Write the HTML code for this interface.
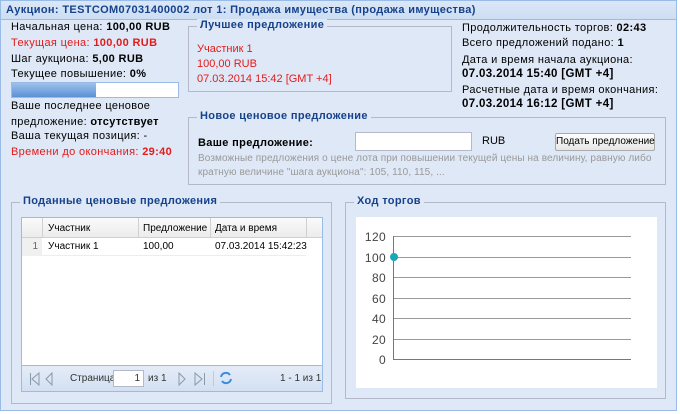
<!DOCTYPE html>
<html><head><meta charset="utf-8"><style>
*{margin:0;padding:0;box-sizing:border-box}
body{width:680px;height:413px;background:#fff;font-family:"Liberation Sans",Arial,sans-serif;font-size:11px;letter-spacing:0.35px;color:#000;position:relative;overflow:hidden}
.a{position:absolute;white-space:nowrap}
#panel{position:absolute;left:0;top:0;width:677px;height:411px;border:1px solid #99bbe8;background:#dfe8f6}
#hdr{position:absolute;left:0;top:0;width:675px;height:19px;background:linear-gradient(#dae7f6,#cddef3);border-bottom:1px solid #99bbe8;color:#15428b;font-weight:bold;padding:3px 0 0 5px}
.fs{position:absolute;border:1px solid #b5b8c8}
.lg{position:absolute;top:-8px;left:8px;background:#dfe8f6;padding:0 3px;color:#15428b;font-weight:bold;font-size:11px}
.red{color:#e31b1b}
b{font-weight:bold}
.g{color:#999;letter-spacing:0.1px}
.gr{font-size:10px;letter-spacing:0}
</style></head><body>
<div id="panel">
<div id="hdr">Аукцион: TESTCOM07031400002 лот 1: Продажа имущества (продажа имущества)</div>

<div class="a" style="left:10px;top:20px">Начальная цена: <b>100,00 RUB</b></div>
<div class="a red" style="left:10px;top:36px">Текущая цена: <b>100,00 RUB</b></div>
<div class="a" style="left:10px;top:52px">Шаг аукциона: <b>5,00 RUB</b></div>
<div class="a" style="left:10px;top:67px">Текущее повышение: <b>0%</b></div>
<div class="a" style="left:10px;top:81px;width:168px;height:16px;border:1px solid #99bbe8;background:#fff"><div style="width:84px;height:14px;background:linear-gradient(#9fc1ea,#5b91d6)"></div></div>
<div class="a" style="left:10px;top:99px">Ваше последнее ценовое</div>
<div class="a" style="left:10px;top:115px">предложение: <b>отсутствует</b></div>
<div class="a" style="left:10px;top:129px">Ваша текущая позиция: -</div>
<div class="a red" style="left:10px;top:145px">Времени до окончания: <b>29:40</b></div>

<div class="fs" style="left:187px;top:25px;width:264px;height:66px"><div class="lg">Лучшее предложение</div>
<div class="a red" style="left:8px;top:16px;letter-spacing:0">Участник 1</div>
<div class="a red" style="left:8px;top:31px;letter-spacing:0">100,00 RUB</div>
<div class="a red" style="left:8px;top:46px;letter-spacing:0">07.03.2014 15:42 [GMT +4]</div>
</div>

<div class="a" style="left:461px;top:21px">Продолжительность торгов: <b>02:43</b></div>
<div class="a" style="left:461px;top:36px">Всего предложений подано: <b>1</b></div>
<div class="a" style="left:461px;top:53px">Дата и время начала аукциона:</div>
<div class="a" style="left:461px;top:67px;font-weight:bold;font-size:11.5px">07.03.2014 15:40 [GMT +4]</div>
<div class="a" style="left:461px;top:83px">Расчетные дата и время окончания:</div>
<div class="a" style="left:461px;top:97px;font-weight:bold;font-size:11.5px">07.03.2014 16:12 [GMT +4]</div>

<div class="fs" style="left:187px;top:116px;width:478px;height:68px"><div class="lg">Новое ценовое предложение</div>
<div class="a" style="left:9px;top:19px;font-weight:bold">Ваше предложение:</div>
<div class="a" style="left:166px;top:14px;width:117px;height:19px;border:1px solid #b5b8c8;background:#fff"></div>
<div class="a" style="left:293px;top:17px;letter-spacing:0">RUB</div>
<div class="a" style="left:366px;top:15px;width:100px;height:18px;border:1px solid #aaa;background:linear-gradient(#fff,#e6e6e6);border-radius:2px;text-align:center;font-size:10px;line-height:16px;letter-spacing:0">Подать предложение</div>
<div class="a g" style="left:9px;top:35px;font-size:10px">Возможные предложения о цене лота при повышении текущей цены на величину, равную либо</div>
<div class="a g" style="left:9px;top:49px;font-size:10px">кратную величине "шага аукциона": 105, 110, 115, ...</div>
</div>

<div class="fs" style="left:10px;top:201px;width:321px;height:202px"><div class="lg">Поданные ценовые предложения</div>
<div class="a gr" style="left:9px;top:14px;width:302px;height:175px;background:#fff;border:1px solid #99bbe8">
 <div class="a" style="left:0;top:0;width:300px;height:20px;background:linear-gradient(#fafafa,#ececec);border-bottom:1px solid #d0d0d0">
  <div class="a" style="left:20px;top:0;height:20px;border-left:1px solid #d0d0d0"></div>
  <div class="a" style="left:26px;top:5px">Участник</div>
  <div class="a" style="left:116px;top:0;height:20px;border-left:1px solid #d0d0d0"></div>
  <div class="a" style="left:121px;top:5px">Предложение</div>
  <div class="a" style="left:188px;top:0;height:20px;border-left:1px solid #d0d0d0"></div>
  <div class="a" style="left:193px;top:5px">Дата и время</div>
  <div class="a" style="left:284px;top:0;height:20px;border-left:1px solid #d0d0d0"></div>
 </div>
 <div class="a" style="left:0;top:20px;width:284px;height:18px;border-bottom:1px solid #ededed">
  <div class="a" style="left:0;top:0;width:20px;height:18px;background:#f0f0f0;text-align:right;padding:3px 4px 0 0;color:#666">1</div>
  <div class="a" style="left:26px;top:3px">Участник 1</div>
  <div class="a" style="left:121px;top:3px">100,00</div>
  <div class="a" style="left:193px;top:3px">07.03.2014 15:42:23</div>
 </div>
 <div class="a" style="left:0;top:147px;width:300px;height:26px;background:linear-gradient(#e4ecf7,#d3e0f2);border-top:1px solid #99bbe8;color:#333">
  <svg class="a" style="left:6px;top:6px" width="30" height="14" fill="none" stroke="#8899aa"><path d="M2.5 1v12M11 1L4 7l7 6z"/><path d="M24 1l-6 6 6 6z"/></svg>
  <div class="a" style="left:48px;top:7px">Страница</div>
  <div class="a" style="left:91px;top:4px;width:31px;height:17px;background:#fff;border:1px solid #b5b8c8;text-align:right;padding:2px 3px 0 0">1</div>
  <div class="a" style="left:126px;top:7px">из 1</div>
  <svg class="a" style="left:155px;top:6px" width="32" height="14" fill="none" stroke="#8899aa"><path d="M2 1l6 6-6 6z"/><path d="M18 1l7 6-7 6zM27.5 1v12"/></svg>
  <div class="a" style="left:191px;top:5px;height:15px;border-left:1px solid #b9cbe3"></div>
  <svg class="a" style="left:197px;top:5px" width="14" height="14" fill="none" stroke="#3a8de0" stroke-width="2"><path d="M2 6a5 5 0 0 1 9-2M12 8a5 5 0 0 1-9 2"/></svg>
  <div class="a" style="left:258px;top:7px">1 - 1 из 1</div>
 </div>
</div>
</div>

<div class="fs" style="left:344px;top:201px;width:321px;height:197px"><div class="lg">Ход торгов</div>
<div class="a" style="left:10px;top:14px;width:301px;height:171px;background:#fff"></div>
</div>
<svg class="a" style="left:0;top:0" width="680" height="413" font-family="Liberation Sans,Arial,sans-serif" font-size="12" fill="#444">
 <g stroke="#999" stroke-width="1">
  <line x1="392" y1="235.5" x2="630" y2="235.5"/>
  <line x1="392" y1="256.5" x2="630" y2="256.5"/>
  <line x1="392" y1="276.5" x2="630" y2="276.5"/>
  <line x1="392" y1="297.5" x2="630" y2="297.5"/>
  <line x1="392" y1="317.5" x2="630" y2="317.5"/>
  <line x1="392" y1="338.5" x2="630" y2="338.5"/>
  <line x1="392" y1="358.5" x2="630" y2="358.5" stroke="#777"/>
  <line x1="392.5" y1="235" x2="392.5" y2="359" stroke="#777"/>
 </g>
 <g text-anchor="end">
  <text x="385" y="240">120</text><text x="385" y="261">100</text><text x="385" y="281">80</text>
  <text x="385" y="302">60</text><text x="385" y="322">40</text><text x="385" y="343">20</text><text x="385" y="363">0</text>
 </g>
 <circle cx="393" cy="256" r="4" fill="#1aa8b8"/>
</svg>
</div>
</body></html>
